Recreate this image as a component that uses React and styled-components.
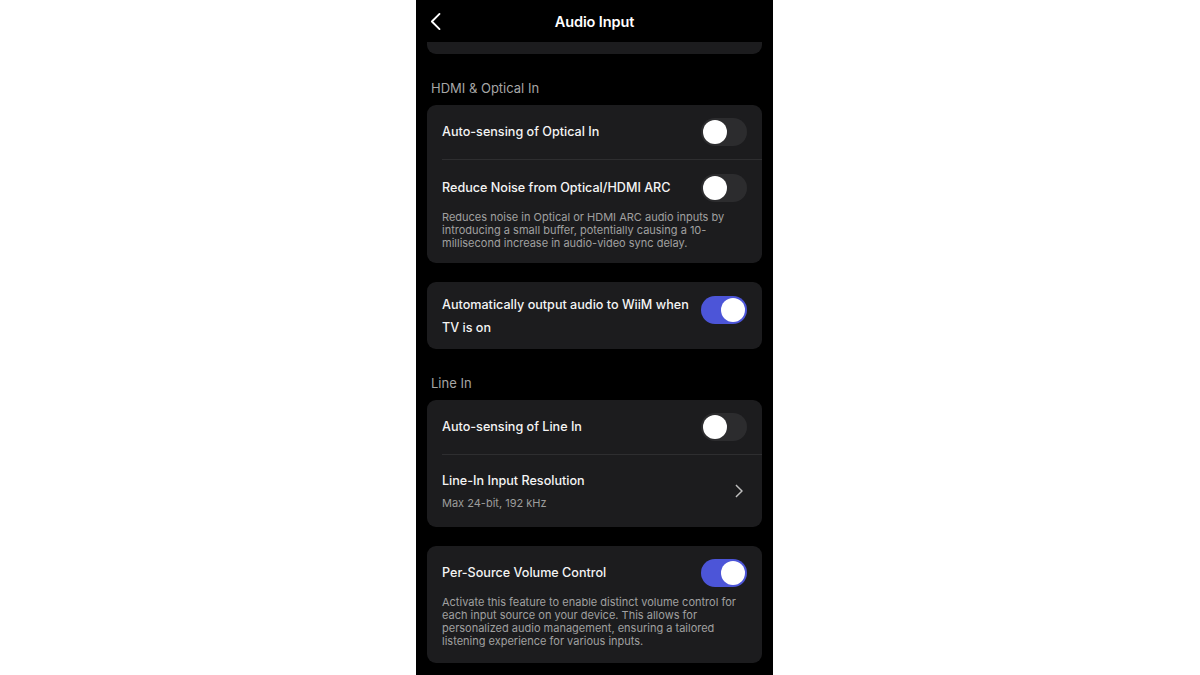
import React from "react"
import styled, { createGlobalStyle } from "styled-components"

const GlobalStyle = createGlobalStyle`
  html, body {
    margin: 0;
    padding: 0;
    background: #ffffff;
  }
  body {
    font-family: Inter, "Noto Sans", "Liberation Sans", sans-serif;
    -webkit-font-smoothing: antialiased;
  }
`

const Phone = styled.div`
  width: 357px;
  height: 675px;
  margin-left: 416px;
  background: #000;
  display: flex;
  flex-direction: column;
  overflow: hidden;
`

const Header = styled.header`
  height: 42px;
  flex-shrink: 0;
  display: grid;
  grid-template-columns: 44px 1fr 44px;
  align-items: center;
  color: #fff;
  h1 {
    margin: 0;
    text-align: center;
    font-size: 14.5px;
    font-weight: 600;
    letter-spacing: -0.1px;
  }
`

const BackButton = styled.button`
  background: none;
  border: 0;
  padding: 0 0 0 14px;
  height: 42px;
  display: flex;
  align-items: center;
  cursor: pointer;
`

const Content = styled.div`
  padding: 0 11px;
  display: flex;
  flex-direction: column;
`

const Card = styled.section`
  background: #1c1c1e;
  border-radius: 9px;
  margin-bottom: ${p => (p.$last ? "0" : "19px")};
`

const CardStub = styled.div`
  height: 12px;
  background: #1c1c1e;
  border-radius: 0 0 9px 9px;
`

const SectionLabel = styled.h2`
  margin: 26px 0 9px 4px;
  font-size: 13px;
  line-height: 16px;
  font-weight: 400;
  color: #a6a6a6;
  ${Card} + & {
    margin-top: 7px;
  }
`

const Row = styled.div`
  padding: ${p => p.$pad || "13px 15px"};
  border-bottom: ${p => (p.$divider ? "1px solid #2e2e30" : "none")};
  margin-left: ${p => (p.$divider ? "15px" : "0")};
  padding-left: ${p => (p.$divider ? "0" : "15px")};
`

const RowMain = styled.div`
  display: flex;
  align-items: ${p => (p.$top ? "flex-start" : "center")};
  justify-content: space-between;
  gap: 10px;
`

const Title = styled.div`
  font-size: 12.6px;
  line-height: ${p => (p.$top ? "23px" : "22px")};
  font-weight: 500;
  color: #f4f4f4;
  margin-top: ${p => (p.$top ? "-3px" : "0")};
`

const Sub = styled.div`
  font-size: 11px;
  line-height: 16px;
  margin-top: 3px;
  color: #9c9c9c;
`

const Description = styled.p`
  margin: 9px 0 1px;
  font-size: 11px;
  line-height: 13px;
  color: #a0a0a0;
  padding-right: 4px;
`

const Track = styled.div`
  width: 46px;
  height: 28px;
  flex-shrink: 0;
  border-radius: 14px;
  background: ${p => (p.$on ? "#4c55d8" : "#2c2c2e")};
  display: flex;
  align-items: center;
  justify-content: ${p => (p.$on ? "flex-end" : "flex-start")};
  padding: 0 2px;
  box-sizing: border-box;
`

const Knob = styled.div`
  width: 24px;
  height: 24px;
  border-radius: 50%;
  background: #fff;
`

const ChevronWrap = styled.span`
  display: flex;
  margin-right: ${p => p.$inset || 0}px;
`

const Toggle = ({ on }) => (
  <Track $on={on}>
    <Knob />
  </Track>
)

const Chevron = ({ size = 14, dir = "right", inset }) => (
  <ChevronWrap $inset={inset}>
    <svg width={size * 0.6} height={size} viewBox="0 0 9 15" fill="none">
      <path
        d={dir === "right" ? "M1.5 1.5L7.5 7.5L1.5 13.5" : "M7.5 1.5L1.5 7.5L7.5 13.5"}
        stroke={dir === "right" ? "#bdbdbd" : "#fff"}
        strokeWidth={dir === "right" ? 1.6 : 1.5}
        strokeLinecap="round"
        strokeLinejoin="round"
      />
    </svg>
  </ChevronWrap>
)

export default function App() {
  return (
    <>
      <GlobalStyle />
      <Phone>
        <Header>
          <BackButton aria-label="Back">
            <Chevron size={19} dir="left" />
          </BackButton>
          <h1>Audio Input</h1>
          <span />
        </Header>
        <Content>
          <CardStub />

          <SectionLabel>HDMI &amp; Optical In</SectionLabel>
          <Card>
            <Row $divider>
              <RowMain>
                <Title>Auto-sensing of Optical In</Title>
                <Toggle />
              </RowMain>
            </Row>
            <Row $pad="14px 15px 12px">
              <RowMain>
                <Title>Reduce Noise from Optical/HDMI ARC</Title>
                <Toggle />
              </RowMain>
              <Description>
                Reduces noise in Optical or HDMI ARC audio inputs by introducing a small
                buffer, potentially causing a 10-millisecond increase in audio-video sync
                delay.
              </Description>
            </Row>
          </Card>

          <Card>
            <Row $pad="14px 15px 10px">
              <RowMain $top>
                <Title $top>Automatically output audio to WiiM when TV is on</Title>
                <Toggle on />
              </RowMain>
            </Row>
          </Card>

          <SectionLabel>Line In</SectionLabel>
          <Card>
            <Row $divider>
              <RowMain>
                <Title>Auto-sensing of Line In</Title>
                <Toggle />
              </RowMain>
            </Row>
            <Row $pad="15px 15px 16px">
              <RowMain>
                <div>
                  <Title>Line-In Input Resolution</Title>
                  <Sub>Max 24-bit, 192 kHz</Sub>
                </div>
                <Chevron size={14} inset={4} />
              </RowMain>
            </Row>
          </Card>

          <Card $last>
            <Row $pad="13px 15px 14px">
              <RowMain>
                <Title>Per-Source Volume Control</Title>
                <Toggle on />
              </RowMain>
              <Description>
                Activate this feature to enable distinct volume control for each input
                source on your device. This allows for personalized audio management,
                ensuring a tailored listening experience for various inputs.
              </Description>
            </Row>
          </Card>
        </Content>
      </Phone>
    </>
  )
}
